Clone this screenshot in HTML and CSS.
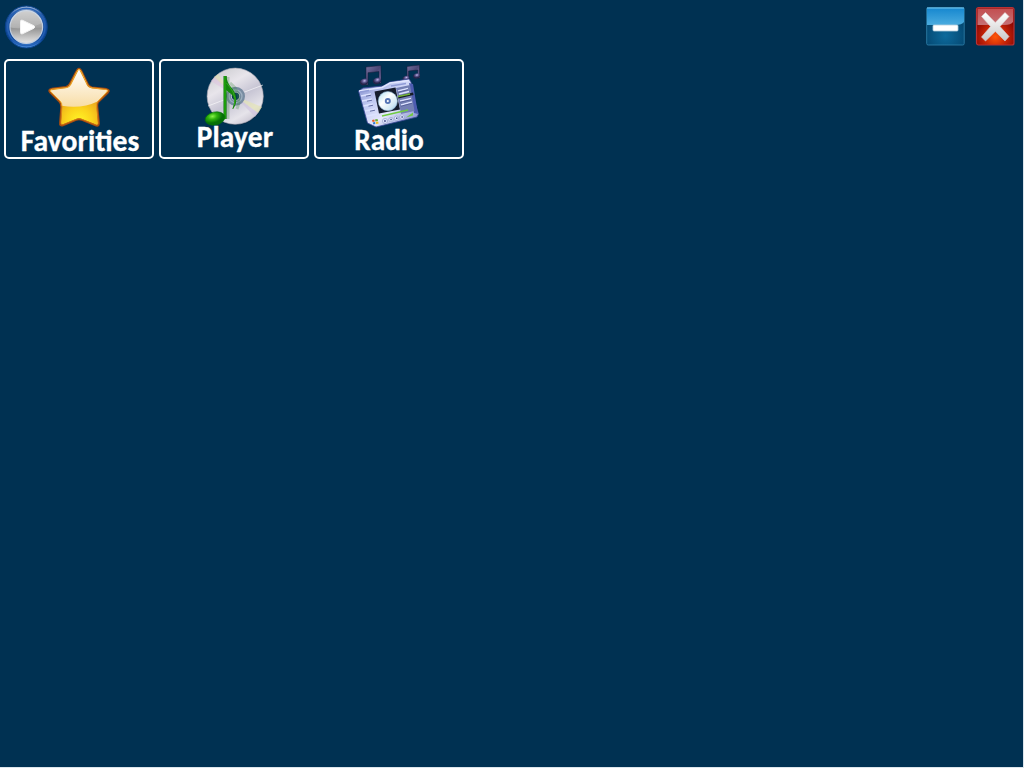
FILE: index.html
```html
<!DOCTYPE html>
<html lang="en">
<head>
<meta charset="utf-8">
<title>Media Center</title>
<link rel="stylesheet" href="styles.css">
</head>
<body>
<div class="app">
<header class="bar">
<svg class="start" viewBox="0 0 44 44" role="img" aria-label="Start">
<defs>
<linearGradient id="ring" x2="0" y2="1"><stop stop-color="#a5bbdc"/><stop offset=".2" stop-color="#2a5ca6"/><stop offset=".8" stop-color="#0e479b"/><stop offset="1" stop-color="#4c90e0"/></linearGradient>
<linearGradient id="face" x2="0" y2="1"><stop stop-color="#c6c6c6"/><stop offset=".5" stop-color="#a2a2a2"/><stop offset=".55" stop-color="#979797"/><stop offset="1" stop-color="#e6e6e6"/></linearGradient>
</defs>
<circle cx="22.3" cy="22" r="21" fill="url(#ring)" stroke="#07418a"/>
<circle cx="22.3" cy="22" r="18.6" fill="none" stroke="#2461b5" stroke-width="1.4"/>
<circle cx="22.3" cy="22" r="16.3" fill="url(#face)" stroke="#c3cfdf" stroke-width="1.2"/>
<path d="M6.3 22C12 25 29 23 38 18A16 16 0 0 0 6.3 22Z" fill="#fff" opacity=".18"/>
<path d="M16.5 16.5Q16.5 14.5 18.5 15.3L30 20.8Q31.5 22 30 23.2L18.5 28.8Q16.5 29.5 16.5 27.5Z" fill="#fff" stroke="#f3f3f3"/>
</svg>
<div class="controls">
<svg class="control" viewBox="0 0 40 40" role="img" aria-label="Minimize">
<defs>
<linearGradient id="blueTop" x2="0" y2="1"><stop stop-color="#1687cf"/><stop offset="1" stop-color="#4bacdf"/></linearGradient>
<radialGradient id="blueBase" cx=".5" cy=".75" r=".6"><stop stop-color="#0d6a9c"/><stop offset="1" stop-color="#04466f"/></radialGradient>
</defs>
<rect x="1.7" y="1.5" width="37.5" height="37.5" rx="1.5" fill="url(#blueBase)" stroke="#2d7da6" stroke-width=".9"/>
<path d="M2 2H39V16Q37 19 30 19H2Z" fill="url(#blueTop)"/>
<path d="M2 2H39" stroke="#74c6ef"/>
<rect x="8" y="19" width="25" height="6" rx="1" fill="#fff" stroke="#b1cddd" stroke-width=".8"/>
</svg>
<svg class="control" viewBox="0 0 40 40" role="img" aria-label="Close">
<defs>
<linearGradient id="redTop" x2="0" y2="1"><stop stop-color="#c34e50"/><stop offset="1" stop-color="#c67175"/></linearGradient>
<radialGradient id="redBase" cx=".5" cy=".78" r=".6"><stop stop-color="#ff5608"/><stop offset=".5" stop-color="#c62508"/><stop offset="1" stop-color="#860503"/></radialGradient>
<linearGradient id="cross" x2="0" y2="1"><stop stop-color="#fff"/><stop offset="1" stop-color="#c9c9c9"/></linearGradient>
</defs>
<rect x="1.5" y="1.5" width="37.5" height="37.5" rx="2" fill="url(#redBase)" stroke="#b83235" stroke-width="1.2"/>
<path d="M2.5 2.5H38V16Q36 19 29 19H2.5Z" fill="url(#redTop)"/>
<path d="M10.5 6.5L20.3 16.5L30 6.5L34 10.5L25 20.5L34 30.5L30 35L20.3 25.5L10.5 35L6.5 31L15.5 20.5L6.5 10.5Z" fill="url(#cross)" stroke="#dacdcd" stroke-width=".6"/>
</svg>
</div>
</header>
<main class="tiles">
<section class="tile tile-favorites">
<svg class="icon" viewBox="44 62 70 70">
<defs>
<linearGradient id="gold" x2="0" y2="1"><stop stop-color="#fbbd39"/><stop offset=".6" stop-color="#eda01d"/><stop offset="1" stop-color="#c76613"/></linearGradient>
<radialGradient id="yellow" gradientUnits="userSpaceOnUse" cx="79" cy="121" r="26"><stop stop-color="#fff526"/><stop offset=".5" stop-color="#fbd31c"/><stop offset="1" stop-color="#eaa41c"/></radialGradient>
<linearGradient id="shine" x2="0" y2="1"><stop stop-color="#fff"/><stop offset="1" stop-color="#f8dda6"/></linearGradient>
</defs>
<path d="M79 68.7Q80.5 68.7 82 72L88 84.5Q89 86.7 92 87.3L106.5 89Q110.3 90 108 92.5L98 102.3Q97 104 97.5 108L99 123.5Q98.8 127 95 125.2L82 120Q79 118.5 76 120L63 125.4Q59.5 126.5 60 122.5L61.2 107Q61.4 103.5 59.3 101.5L50 92.5Q47.5 89.5 52 88.7L66 87Q68.5 86.4 70 83.5L76 72Q77.5 68.7 79 68.7Z" fill="url(#yellow)" stroke="#a64b10" stroke-width="1.8"/>
<path d="M79 69.3L87.3 86Q88.5 88 92 88.4L108 90.3L97.5 101.5Q82 109 61.8 105.8Q62 102.8 59.8 100.5L50 90.5L67 88Q69.5 87.5 71 85Z" fill="url(#shine)"/>
<path d="M79 69.3Q80.2 69.3 81.5 72L87.4 84.7Q88.6 87.2 92 87.8L106.2 89.5Q109 90 107 92.1L97.4 102Q96.3 103.5 96.7 107L98.4 123.2Q98 126 95 124.7L82 119.3Q79 118 76 119.3L63 124.7Q60.3 125.5 60.7 122.5L62 107Q62.2 103 60 101L50.8 92Q48.7 90 52 89.2L67 87.5Q69 87 70.8 83.5L76.6 72Q78 69.3 79 69.3Z" fill="none" stroke="url(#gold)" stroke-width=".9"/>
</svg>
<span class="label">Favorities</span>
</section>
<section class="tile tile-player">
<svg class="icon" viewBox="199 62 70 70">
<defs>
<linearGradient id="disc" x1=".2" y1="0" x2=".8" y2="1"><stop stop-color="#ccccd0"/><stop offset=".3" stop-color="#e8e5eb"/><stop offset=".55" stop-color="#c7c5d4"/><stop offset=".8" stop-color="#e6e4ea"/><stop offset="1" stop-color="#c1bccb"/></linearGradient>
<linearGradient id="stem"><stop stop-color="#057405"/><stop offset=".5" stop-color="#29b80c"/><stop offset="1" stop-color="#006007"/></linearGradient>
<radialGradient id="noteHead" cx=".4" cy=".3"><stop stop-color="#8af34c"/><stop offset=".45" stop-color="#2fb40d"/><stop offset="1" stop-color="#067008"/></radialGradient>
</defs>
<circle cx="235.5" cy="97" r="28.3" fill="#061f39" opacity=".5"/>
<circle cx="235.2" cy="96.2" r="28.1" fill="url(#disc)" stroke="#aaa8b3" stroke-width=".6"/>
<path d="M235 96L211 81L215 76Z" fill="#dfc1df" opacity=".5"/><path d="M235 96L214 77L218 74Z" fill="#e6e4a1" opacity=".45"/>
<path d="M235 96L262 107L258 113Z" fill="#e4e3b2" opacity=".65"/><path d="M235 96L258 113L255 117Z" fill="#cfc1dd" opacity=".6"/>
<path d="M208 106L263 85" stroke="#fff" stroke-width="1" opacity=".6"/>
<circle cx="235.5" cy="96.3" r="7" fill="none" stroke="#788ca2" stroke-width="5"/>
<circle cx="235.5" cy="96.3" r="6.5" fill="none" stroke="#9eafc0" stroke-width="1.3"/>
<circle cx="235.5" cy="96.3" r="3.7" fill="#063558"/>
<path d="M228 77V119M230 83Q243 94 237 109" fill="none" stroke="#4a8b4c" stroke-width="3" opacity=".3"/>
<path d="M223.5 76H226.6V119H223.5Z" fill="url(#stem)"/>
<path d="M225.5 76H226.4Q227 83 231 87Q240.5 98 233.2 109H232.4Q236.5 98 231 94L226 90Z" fill="#16850e"/>
<path d="M226.5 83Q230 87 233 92Q236.5 98 234.3 105" fill="none" stroke="#3cae22" stroke-width=".8"/>
<ellipse cx="215" cy="118.5" rx="10" ry="6.5" transform="rotate(-12 215 118.5)" fill="url(#noteHead)" stroke="#047008" stroke-width=".6"/>
</svg>
<span class="label">Player</span>
</section>
<section class="tile tile-radio">
<svg class="icon" viewBox="354 60 70 70">
<defs>
<linearGradient id="panel" x2="1" y2="1"><stop stop-color="#7883c4"/><stop offset=".35" stop-color="#c1caf3"/><stop offset=".6" stop-color="#e5e8fc"/><stop offset="1" stop-color="#6674bf"/></linearGradient>
<linearGradient id="cd" x2="1" y2="1"><stop stop-color="#a9ddf3"/><stop offset=".4" stop-color="#fff"/><stop offset=".75" stop-color="#d1e8f4"/><stop offset="1" stop-color="#83b7dd"/></linearGradient>
<linearGradient id="violet" x2="1" y2="1"><stop stop-color="#77719f"/><stop offset=".5" stop-color="#4c4876"/><stop offset="1" stop-color="#8e84bb"/></linearGradient>
<radialGradient id="bead" cx=".6" cy=".35"><stop stop-color="#c5bbec"/><stop offset=".45" stop-color="#655e97"/><stop offset="1" stop-color="#25244b"/></radialGradient>
</defs>
<path d="M366 67L381 65.5V83H379V71.5L368 72.7V85H366Z" fill="url(#violet)" stroke="#1b1b38" stroke-width=".5"/>
<path d="M407 66.5L419.5 65V78H417.8V70L408.6 71V80H407Z" fill="url(#violet)" stroke="#1b1b38" stroke-width=".5"/>
<g fill="url(#bead)"><ellipse cx="364" cy="82" rx="4.2" ry="3.2" transform="rotate(-18 364 82)"/><ellipse cx="377" cy="81" rx="4.2" ry="3.2" transform="rotate(-18 377 81)"/>
<ellipse cx="406" cy="78.5" rx="3.5" ry="2.6" transform="rotate(-18 406 78.5)"/><ellipse cx="416.5" cy="76" rx="3.5" ry="2.6" transform="rotate(-18 416.5 76)"/></g>
<path d="M358.5 91L363 88L383 86L390 82L409 79L411 82L413 96L418.5 114L417 117L376 127L367.5 123Z" fill="url(#panel)" stroke="#3a4795" stroke-width=".8"/>
<path d="M359 91L382 87.5L390 83L409 80.5" fill="none" stroke="#e2e7ff" stroke-width="1.5"/>
<path d="M360 92L369 90.5M391 86L406 83.5" stroke="#8f9bd6" stroke-width="1.4"/>
<path d="M409 83L413 84L418 114L414 113Z" fill="#4d5cb0"/>
<path d="M374.5 91.5L395.5 87.5L400 109.5L379 113.5Z" fill="#151c2d"/>
<path d="M396 88L410 85L414.5 111L401 114Z" fill="#7480b4"/>
<g fill="none" stroke="#dce2ff" stroke-width="1.3"><path d="M361 96L371 94M362 101L372 99M363.5 106L373 104M365 111L375 109M367 116L377 114M398 91L408 88.5M399 94L409 91.5M400 101L411 98.5M401 105L412 102"/></g>
<g fill="none" stroke="#4d5791" stroke-width=".8"><path d="M366 96.2L371 95.2M367 101.2L372 100.2M368.5 106.2L373 105.2M370 111.2L375 110.2M398 92.2L408 89.7M400 102.2L411 99.7M401 106.2L412 103.2"/></g>
<path d="M398 96L413 92.5L413.5 95L398.5 98.5Z" fill="#161d25"/><path d="M398 96.5L410 94" stroke="#74b438" stroke-width="1.4"/>
<circle cx="387.8" cy="101.1" r="9.6" fill="url(#cd)" stroke="#8fb6d4" stroke-width=".6"/>
<circle cx="387.8" cy="101.1" r="3" fill="#5474b5"/><circle cx="387.8" cy="101.1" r="1.1" fill="#fff"/>
<path d="M382 116L408 110" stroke="#70cb41" stroke-width="1.5"/><path d="M406 117.5L413 112.5V115.6Z" fill="#72ca3e"/>
<g fill="#e2e7ff" stroke="#8f9ac4" stroke-width=".6"><circle cx="385" cy="121" r="2.6"/><circle cx="391" cy="119.6" r="2.2"/><circle cx="396.5" cy="118.2" r="2.2"/><circle cx="402" cy="117" r="2.2"/></g>
<path d="M384.4 119.7L386.4 121L384.4 122.2Z" fill="#2e3778"/><path d="M390.3 119.6H391.8M396 118.2H397.5M401.4 117H402.9" stroke="#46508b" stroke-width="1.5"/>
<path d="M372 120L374.3 119.5L374.8 121.5L372.6 122Z" fill="#e75c20"/><path d="M375 119.5L377.5 119L378 121L375.5 121.5Z" fill="#64ad35"/><path d="M372.7 122.6L375 122.1L375.4 124L373.4 124.6Z" fill="#327bd2"/><path d="M375.7 122L378.1 121.5L378.6 123.5L376.2 124Z" fill="#efbd25"/>
</svg>
<span class="label">Radio</span>
</section>
</main>
</div>
</body>
</html>
```
FILE: styles.css
```css
* { box-sizing: border-box; }
body { margin: 0; background: #dce5ec; }
.app { width: 1023px; height: 767px; background: #003152; overflow: hidden; }
.bar { display: flex; justify-content: space-between; height: 59px; padding: 5px 8px 0 4px; }
.start { width: 44px; height: 44px; }
.controls { display: flex; gap: 10px; padding-top: 1px; }
.control { width: 40px; height: 40px; }
.tiles { display: flex; gap: 5px; padding-left: 4px; }
.tile { width: 150px; height: 100px; border: 2px solid #fff; border-radius: 5px; display: flex; flex-direction: column; align-items: center; }
.icon { width: 70px; height: 70px; margin-top: 1px; flex: none; }
.tile-radio .icon { margin-top: -1px; }
.label { font: 700 29.33px/30px "Carlito", "Calibri", "Lato", sans-serif; color: #fff; white-space: nowrap; margin-top: -6px; -webkit-text-stroke: .3px #fff; }
.tile-favorites .label { margin-left: 2px; font-size: 29.6px; }
.tile-player .label { margin: -10px 0 0 2px; letter-spacing: .2px; }
.tile-radio .label { margin-top: -5px; }
```
